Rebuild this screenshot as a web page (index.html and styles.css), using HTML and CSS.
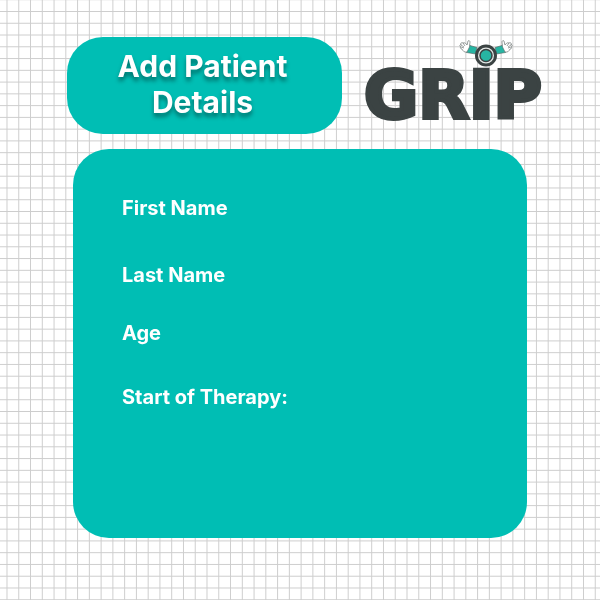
FILE: index.html
```
<!DOCTYPE html>
<html lang="en">
<head>
<meta charset="utf-8">
<meta name="viewport" content="width=device-width, initial-scale=1">
<title>Add Patient Details</title>
<link rel="stylesheet" href="styles.css">
</head>
<body>
<svg class="grid" aria-hidden="true">
  <defs>
    <pattern id="cells" x="6.5" y="11" width="11.765" height="11.765" patternUnits="userSpaceOnUse">
      <path d="M.5 0V11.765M0 .5H11.765" stroke="#cdcdcd" stroke-width="1"/>
    </pattern>
  </defs>
  <rect width="100%" height="100%" fill="url(#cells)"/>
</svg>
<main class="page">
  <header class="top">
    <h1 class="title">Add Patient Details</h1>
    <svg class="logo" viewBox="0 0 180 84" role="img" aria-label="GRIP">
      <text class="wordmark" x="0" y="81">GRIP</text>
      <g stroke="#59615f" stroke-width=".6" stroke-linejoin="round">
        <path fill="#27b5a3" d="M104 6l2 2.500 7 2-1.500 6.500-9-1.500zM140 6l-2 2.500-7 2 1.500 6.500 9-1.500z"/>
        <path fill="#fff" d="M103 15c-3 .5-4-1-5-3-2 0-2-2-1-2-2-1-1-3 0-2-1-2 1-3 2-2 2-1 3 1 4 2l1-4c1-1 2 0 2 1l-.5 5zM141 15c3 .5 4-1 5-3 2 0 2-2 1-2 2-1 1-3 0-2 1-2-1-3-2-2-2-1-3 1-4 2l-1-4c-1-1-2 0-2 1l.5 5z"/>
        <path fill="none" d="M97 8l3 2M97 10l3 1M99 6l2 3M147 8l-3 2M147 10l-3 1M145 6l-2 3"/>
      </g>
      <circle cx="122" cy="18.500" r="9.500" fill="#e3e8e6" stroke="#3b4343" stroke-width="3"/>
      <circle cx="122" cy="18.500" r="6" fill="#27b5a3" stroke="#3b4343" stroke-width="1.500"/>
    </svg>
  </header>
  <form class="card">
    <div class="field"><label for="first">First Name</label><input id="first" type="text"></div>
    <div class="field"><label for="last">Last Name</label><input id="last" type="text"></div>
    <div class="field"><label for="age">Age</label><input id="age" type="text"></div>
    <div class="field"><label for="start">Start of Therapy:</label><input id="start" type="text"></div>
  </form>
</main>
</body>
</html>
```
FILE: styles.css
```
* { box-sizing: border-box; }

body {
  margin: 0;
  min-height: 100vh;
  background: #fff;
  font-family: Inter, sans-serif;
  color: #fff;
}

.grid {
  position: fixed;
  inset: 0;
  width: 100%;
  height: 100%;
  z-index: -1;
}

.page { padding: 37px 56px 62px 67px; }

.top {
  display: grid;
  grid-template-columns: 275fr 180fr;
  column-gap: 22px;
  align-items: start;
}

.title {
  margin: 0;
  padding: 11px 42px 14px 38px;
  border-radius: 36px;
  background: #00beb4;
  font-size: 30px;
  line-height: 36px;
  font-weight: 700;
  text-align: center;
  text-shadow: 0 4px 4px rgba(0, 0, 0, .4);
}

.logo { width: 100%; overflow: visible; }

.wordmark {
  font-family: "DejaVu Sans", sans-serif;
  font-size: 66px;
  font-weight: 700;
  fill: #3b4343;
  stroke: #3b4343;
  stroke-width: 4px;
}

.card {
  display: grid;
  grid-template-rows: 67px 58px 64px 24px;
  margin: 15px 17px 0 6px;
  padding: 47px 49px 128px;
  min-height: 389px;
  border-radius: 36px;
  background: #00beb4;
  font-size: 20px;
  line-height: 24px;
  font-weight: 700;
}

.field { display: flex; align-items: flex-start; gap: 8px; }

.field input {
  flex: 1;
  min-width: 0;
  height: 24px;
  padding: 0;
  border: 0;
  outline: 0;
  background: transparent;
  color: inherit;
  font: inherit;
}
```
